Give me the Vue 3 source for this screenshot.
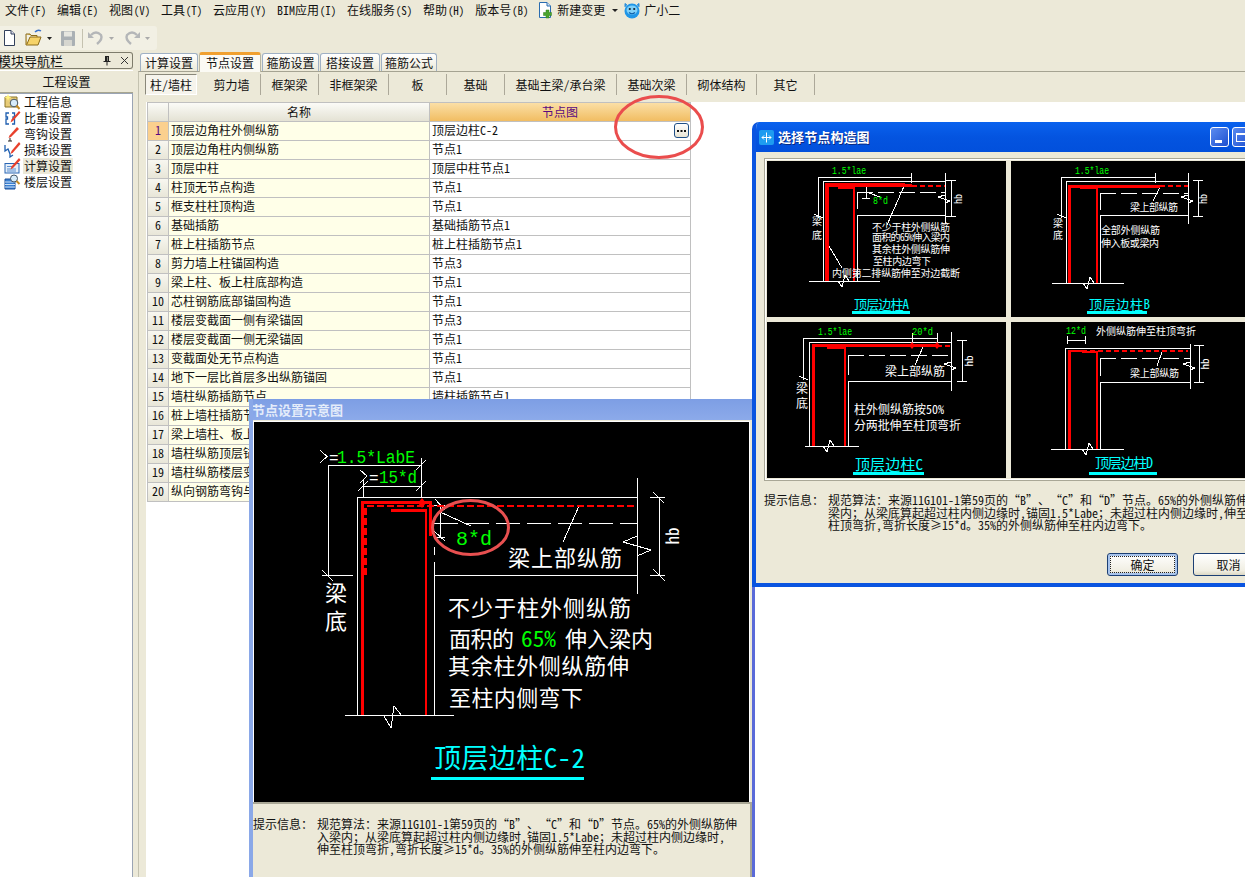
<template>
  <div class="app">
    <div class="menubar">
      <span v-for="m in menus" :key="m.label" class="menu-item">{{ m.label }}<span class="mn">({{ m.key }})</span></span>
      <span class="menu-extra">
        <svg class="ico" width="16" height="18" viewBox="0 0 16 18">
          <path d="M2.5 1.5H10L13.5 5V16.5H2.5Z" fill="#fff" stroke="#2a6cb0" />
          <path d="M10 1.5V5H13.5" fill="#cfe2f5" stroke="#2a6cb0" />
          <path d="M9 9H12V11.5H14.5V14.5H12V17H9V14.5H6.5V11.5H9Z" fill="#4aa32e" stroke="#2f7d1c" stroke-width=".5" />
        </svg>
        <span class="extra-text">新建变更</span>
        <svg class="caret" width="6" height="3" viewBox="0 0 6 3"><path d="M0 0H6L3 3Z" fill="#222" /></svg>
        <svg class="mascot" width="16" height="17" viewBox="0 0 16 17">
          <path d="M3 3L1 1.5 1 5M13 3L15 1.5 15 5" fill="#2a8fdc" stroke="#2a8fdc" />
          <ellipse cx="8" cy="9" rx="7.5" ry="7.5" fill="#1f96e8" />
          <ellipse cx="8" cy="8" rx="5.5" ry="4.5" fill="#7fd0f8" />
          <circle cx="5.8" cy="7" r="1.1" fill="#123" />
          <circle cx="10.2" cy="7" r="1.1" fill="#123" />
          <path d="M5 10.5Q8 13 11 10.5" fill="none" stroke="#0d5ea8" stroke-width="1.2" />
        </svg>
        <span class="extra-text">广小二</span>
      </span>
    </div>

    <div class="toolrow">
      <div class="toolbar">
        <svg width="82" height="24" viewBox="0 0 82 24">
          <path d="M4.5 4.500H11L14.500 8V19.500H4.500Z" fill="#fff" stroke="#33415c" />
          <path d="M11 4.500V8H14.500" fill="#dde" stroke="#33415c" />
          <path d="M26 8V19H38L41 11H30L27 18" fill="#f6d36a" stroke="#8a6a1a" />
          <path d="M26 8H30L31 9.500H37V11" fill="#e8b93e" stroke="#8a6a1a" />
          <path d="M35 6Q38 3 41 5" fill="none" stroke="#3a70c8" stroke-width="1.500" />
          <path d="M47 11H52L49.500 14Z" fill="#222" />
          <rect x="61" y="5" width="14" height="15" rx="1" fill="#aab0b4" />
          <rect x="64" y="5.500" width="8" height="5" fill="#e6e6e0" />
          <rect x="64" y="14" width="8" height="6" fill="#d6d6d0" />
        </svg>
        <i class="tool-sep"></i>
        <svg width="72" height="24" viewBox="0 0 72 24">
          <path d="M8 9Q13 4 18 9Q20 13 14 18" fill="none" stroke="#b4b6b8" stroke-width="2.400" />
          <path d="M5 6V12H11Z" fill="#b4b6b8" />
          <path d="M26 11H31L28.500 14Z" fill="#aaa" />
          <path d="M54 9Q49 4 44 9Q42 13 48 18" fill="none" stroke="#b4b6b8" stroke-width="2.400" />
          <path d="M57 6V12H51Z" fill="#b4b6b8" />
          <path d="M62 11H67L64.500 14Z" fill="#aaa" />
        </svg>
      </div>
    </div>

    <div class="workspace">
      <aside class="nav">
        <div class="nav-head">
          <span class="nav-title">模块导航栏</span>
          <svg width="10" height="11" viewBox="0 0 10 11"><path d="M3 1H7V6H8.500V7H5.500V10.500H4.500V7H1.500V6H3ZM5.500 2V6H6V2Z" fill="#222" /></svg>
          <svg width="9" height="9" viewBox="0 0 9 9"><path d="M1 1L8 8M8 1L1 8" stroke="#333" fill="none" /></svg>
        </div>
        <div class="nav-btn">工程设置</div>
        <ul class="nav-list">
          <li v-for="(n, i) in navItems" :key="n" class="nav-row">
            <svg width="17" height="16" viewBox="0 0 17 16" class="nav-ico">
              <template v-if="i === 0">
                <path d="M1 3H13V13H1Z" fill="#e8cc78" stroke="#8a7428" />
                <path d="M4 0L5 2.500L7.500 3.500L5 4.500L4 7L3 4.500L.5 3.500L3 2.500Z" fill="#fff27a" />
                <circle cx="10" cy="9" r="3.800" fill="#d7ecfb" stroke="#456" />
                <path d="M12.500 11.500L15.500 15" stroke="#c58a22" stroke-width="2" />
              </template>
              <template v-else-if="i === 1">
                <path d="M5 3H2V7H3.500V9H2V14H5M8 3H10.500V7H9V9H10.500V14H8" fill="none" stroke="#1f5fb0" stroke-width="1.300" />
                <path d="M15 1L16.500 2.500L9 11L6.500 12.500L7.500 9.500Z" fill="#e8402c" />
              </template>
              <template v-else-if="i === 2">
                <path d="M13 1L15 3L7 11L4.500 12L5.500 9.500Z" fill="#e8402c" />
                <path d="M6 12V15M4 15H8" stroke="#222" fill="none" />
              </template>
              <template v-else-if="i === 3">
                <path d="M1 3V9L4 7L6 12V15L9 13" fill="none" stroke="#1f5fb0" stroke-width="1.300" />
                <path d="M15 0L16.500 2L9 10.500L6.500 12L7.500 9Z" fill="#e8402c" />
              </template>
              <template v-else-if="i === 4">
                <rect x="1" y="5.500" width="14" height="9.500" fill="#e4eef9" stroke="#2a66b4" />
                <path d="M3 8.500H9M3 11H12M3 13H12" stroke="#5b8fd0" />
                <path d="M15 0L16.500 2L9 10L6.500 11.500L7.500 8.500Z" fill="#e8402c" />
              </template>
              <template v-else>
                <path d="M1 5H11V15H1Z" fill="#3a7fd0" stroke="#1a4f98" />
                <path d="M1 8H11M1 10.500H11M1 13H11" stroke="#cfe3f8" />
                <circle cx="10" cy="4.500" r="3.500" fill="#d7ecfb" stroke="#456" />
                <path d="M12.500 7L15.500 10" stroke="#c58a22" stroke-width="2" />
              </template>
            </svg>
            <span class="nav-text" :class="{ sel: i === 4 }">{{ n }}</span>
          </li>
        </ul>
      </aside>

      <main class="main">
        <div class="tabs">
          <div v-for="t in tabs" :key="t.label" class="tab" :class="{ active: t.active }" :style="{ width: t.w + 'px' }">{{ t.label }}</div>
        </div>
        <div class="panel">
          <div class="subtabs">
            <div v-for="(s, i) in subTabs" :key="s.label" class="subtab" :class="{ pressed: i === 0 }" :style="{ width: s.w + 'px' }">{{ s.label }}</div>
          </div>
          <div class="sheet">
            <div class="grid">
              <div class="hd corner"></div>
              <div class="hd">名称</div>
              <div class="hd hd-on">节点图</div>
              <template v-for="(r, i) in rows" :key="i">
                <div class="num" :class="{ on: i === 0 }">{{ i + 1 }}</div>
                <div class="name">{{ r[0] }}</div>
                <div class="val">
                  {{ r[1] }}
                  <span v-if="i === 0" class="dots">
                    <svg width="13" height="13" viewBox="0 0 13 13"><path d="M2 6H4V8H2ZM5.500 6H7.500V8H5.500ZM9 6H11V8H9Z" fill="#111" /></svg>
                  </span>
                </div>
              </template>
            </div>
          </div>
        </div>
      </main>
    </div>

    <svg class="mark" width="96" height="70" viewBox="0 0 96 70">
      <ellipse cx="48" cy="35" rx="43.500" ry="30.500" fill="none" stroke="#ea4d4d" stroke-width="3" />
    </svg>

    <!-- 节点设置示意图 -->
    <section class="dlg dlg-view">
      <header class="view-title">节点设置示意图</header>
      <svg class="canvas" width="495" height="380" viewBox="254 422 495 380">
        <path class="ln" d="M328 465H421M328 465V575M322 575H353M322 570L333 581M421 458V497M416 470L426 460M416 491L426 481M363 486H421M363 480V497M358 491L368 481M357 497H637M357 497V715M434 547V555M434 562V715M434 575H637M637 478V594M345 715H454M659 497V575M650 497H665M650 575H665M653 492L664 503M653 569L665 581M440 504V537M434 505H445M434 537H445M435 499L445 510M434 531L445 541M440 512L471 526M579 506L563 542" />
        <path class="ln" stroke-dasharray="24 7" d="M434 523H637" />
        <path class="ln" d="M637 536L623 542L651 550L637 556M384 716L391 728L394 706L402 716" />
        <path class="ln" d="M320 450L327 456.500L320 463" />
        <path class="ln" d="M360 470L367 476L360 483" />
        <path class="red" stroke-width="3" d="M362 715V502.500H430V536" />
        <path class="red" stroke-width="2.500" stroke-dasharray="7 3" d="M365.500 575V506H637" />
        <path class="red" stroke-width="2.500" d="M426 715V510.500H391" />
        <path class="redf" d="M422 498L426 503L422 508L418 503Z" />
        <text class="t w mono" x="329" y="463" font-size="16">=</text>
        <text class="t g mono" x="337" y="463" font-size="19" textLength="78" lengthAdjust="spacingAndGlyphs">1.5*LabE</text>
        <text class="t w mono" x="369" y="483" font-size="16">=</text>
        <text class="t g mono" x="379" y="483" font-size="19" textLength="38" lengthAdjust="spacingAndGlyphs">15*d</text>
        <text class="t g mono" x="456" y="545" font-size="20" textLength="36" lengthAdjust="spacingAndGlyphs">8*d</text>
        <text class="t w" x="508" y="566" font-size="22" textLength="114">梁上部纵筋</text>
        <text class="t w" x="325" y="601" font-size="22">梁</text>
        <text class="t w" x="325" y="629" font-size="22">底</text>
        <text class="t w hb" transform="translate(679 536) rotate(-90)" font-size="17">hb</text>
        <text class="t w" x="448" y="616" font-size="22" textLength="183">不少于柱外侧纵筋</text>
        <text class="t w" x="449" y="647" font-size="22" textLength="65">面积的</text>
        <text class="t g" x="521" y="647" font-size="22" textLength="35" lengthAdjust="spacingAndGlyphs">65%</text>
        <text class="t w" x="565" y="647" font-size="22" textLength="88">伸入梁内</text>
        <text class="t w" x="448" y="674" font-size="22" textLength="181">其余柱外侧纵筋伸</text>
        <text class="t w" x="449" y="706" font-size="22" textLength="134">至柱内侧弯下</text>
        <text class="t c" x="434" y="768" font-size="27" textLength="151">顶层边柱C-2</text>
        <rect class="cy" x="431" y="777" width="153" height="3" />
        <ellipse cx="470.500" cy="527.500" rx="38" ry="27" fill="none" stroke="#e85050" stroke-width="3" />
      </svg>
      <div class="hint view-hint">
        <span class="hint-label">提示信息：</span>
        <div class="hint-lines">
          <div>规范算法：来源11G101-1第59页的<i class="qo">“</i>B<i class="qc">”</i>、<i class="qo">“</i>C<i class="qc">”</i>和<i class="qo">“</i>D<i class="qc">”</i>节点。65%的外侧纵筋伸</div>
          <div>入梁内；从梁底算起超过柱内侧边缘时，锚固1.5*Labe；未超过柱内侧边缘时，</div>
          <div>伸至柱顶弯折，弯折长度≥15*d。35%的外侧纵筋伸至柱内边弯下。</div>
        </div>
      </div>
    </section>

    <!-- 选择节点构造图 -->
    <section class="dlg dlg-pick">
      <header class="pick-title">
        <svg width="15" height="15" viewBox="0 0 15 15">
          <rect width="15" height="15" rx="2" fill="#1e9cf0" />
          <path d="M7.500 2.500V12.500M3 7.500H12M5 5.500L3 7.500L5 9.500M10 5.500L12 7.500L10 9.500" fill="none" stroke="#fff" />
        </svg>
        <span>选择节点构造图</span>
        <i class="win-btn"><b class="min"></b></i>
        <i class="win-btn"><b class="max"></b></i>
      </header>
      <div class="pick-body">
        <div class="thumbs">
          <svg class="thumb" width="239" height="156" viewBox="767 161 239 156">
            <path class="ln" d="M818 177H912M818 177V218M814 214L823 218M911 173V183M823 181H945M823 181V281M945 173V224M857 192V209M857 215V281M857 215H945M951 180V216M946 180H956M946 216H956M809 281H880M866 183V198M862 198H870M829 246L842 268M905 184L887 225M866 192L880 197" />
            <path class="ln" stroke-dasharray="16 5" d="M857 192.500H945" />
            <path class="ln" d="M945 195L938 197L950 201L945 203M838 281L842 287L845 275L849 281" />
            <path class="red" stroke-width="4" d="M827 281V185H905" />
            <path class="red" stroke-width="3" d="M905 185H912" />
            <path class="red" stroke-width="2" stroke-dasharray="5 3" d="M912 185.500H945" />
            <path class="red" stroke-width="2" d="M854 281V187.500H838" />
            <text class="t mono g" x="832" y="174" font-size="10" textLength="34" lengthAdjust="spacingAndGlyphs">1.5*lae</text>
            <text class="t mono g" x="873" y="204" font-size="10" textLength="15" lengthAdjust="spacingAndGlyphs">8*d</text>
            <text class="t w hb" transform="translate(962 199) rotate(-90)" font-size="10">hb</text>
            <text class="t w" x="812" y="225" font-size="10">梁</text>
            <text class="t w" x="812" y="239" font-size="10">底</text>
            <text class="t w" x="872" y="231" font-size="10" textLength="78">不少于柱外侧纵筋</text>
            <text class="t w" x="872" y="241" font-size="10" textLength="78">面积的65%伸入梁内</text>
            <text class="t w" x="872" y="253" font-size="10" textLength="78">其余柱外侧纵筋伸</text>
            <text class="t w" x="873" y="265" font-size="10" textLength="58">至柱内边弯下</text>
            <text class="t w" x="832" y="277" font-size="10" textLength="128">内侧第二排纵筋伸至对边截断</text>
            <text class="t c" x="854" y="309" font-size="13" textLength="55">顶层边柱A</text>
            <rect class="cy" x="852" y="311" width="58" height="3" />
          </svg>
          <svg class="thumb" width="239" height="156" viewBox="1011 161 239 156">
            <path class="ln" d="M1061 177H1156M1061 177V218M1057 214L1066 218M1155 173V183M1066 181H1188M1066 181V283M1188 173V224M1100 194V210M1100 215V283M1100 215H1188M1198 180V216M1193 180H1203M1193 216H1203M1052 283H1124M1160 187L1153 201" />
            <path class="ln" stroke-dasharray="16 5" d="M1100 193.500H1188" />
            <path class="ln" d="M1188 195L1181 197L1193 201L1188 203M1083 283L1087 289L1090 277L1094 283" />
            <path class="red" stroke-width="3" d="M1069.500 283V186H1160" />
            <path class="red" stroke-width="2" stroke-dasharray="5 3" d="M1160 186H1188" />
            <path class="red" stroke-width="2" d="M1097 283V187.500H1080" />
            <text class="t mono g" x="1075" y="174" font-size="10" textLength="34" lengthAdjust="spacingAndGlyphs">1.5*lae</text>
            <text class="t w hb" transform="translate(1207 199) rotate(-90)" font-size="10">hb</text>
            <text class="t w" x="1053" y="227" font-size="10">梁</text>
            <text class="t w" x="1053" y="239" font-size="10">底</text>
            <text class="t w" x="1130" y="211" font-size="10" textLength="48">梁上部纵筋</text>
            <text class="t w" x="1101" y="234" font-size="10" textLength="59">全部外侧纵筋</text>
            <text class="t w" x="1101" y="247" font-size="10" textLength="58">伸入板或梁内</text>
            <text class="t c" x="1089" y="309" font-size="13" textLength="61">顶层边柱B</text>
            <rect class="cy" x="1087" y="311" width="60" height="3" />
          </svg>
          <svg class="thumb" width="239" height="156" viewBox="767 322 239 156">
            <path class="ln" d="M803 338H937M803 338V380M799 376L808 380M809 342H951M809 342V446M951 332V391M848 355V375M848 381V446M848 381H951M962 340V381M957 340H967M957 381H967M805 446H859M912 333V345M937 333V345M923 347L915 365" />
            <path class="ln" stroke-dasharray="16 5" d="M848 355.500H951" />
            <path class="ln" d="M951 362L944 364L956 368L951 370M823 446L827 452L830 440L834 446" />
            <path class="red" stroke-width="2.500" d="M813.500 446V345.500H937" />
            <path class="red" stroke-width="2" stroke-dasharray="5 3" d="M937 345.500H951" />
            <path class="red" stroke-width="2" d="M845 446V348H827" />
            <path class="redf" d="M912 342L915 345.500L912 349L909 345.500ZM937 342L940 345.500L937 349L934 345.500Z" />
            <text class="t mono g" x="818" y="335" font-size="10" textLength="34" lengthAdjust="spacingAndGlyphs">1.5*lae</text>
            <text class="t mono g" x="912" y="335" font-size="10" textLength="21" lengthAdjust="spacingAndGlyphs">20*d</text>
            <text class="t w hb" transform="translate(973 361) rotate(-90)" font-size="11">hb</text>
            <text class="t w" x="796" y="393" font-size="12">梁</text>
            <text class="t w" x="796" y="408" font-size="12">底</text>
            <text class="t w" x="885" y="376" font-size="12" textLength="60">梁上部纵筋</text>
            <text class="t w" x="854" y="414" font-size="12" textLength="90">柱外侧纵筋按50%</text>
            <text class="t w" x="854" y="430" font-size="12" textLength="107">分两批伸至柱顶弯折</text>
            <text class="t c" x="855" y="470" font-size="15" textLength="68">顶层边柱C</text>
            <rect class="cy" x="853" y="472" width="71" height="3" />
          </svg>
          <svg class="thumb" width="239" height="156" viewBox="1011 322 239 156">
            <path class="ln" d="M1067 340H1085M1067 336V344M1085 336V344M1065 348H1190M1065 348V449M1190 344V389M1100 358V376M1100 382V449M1100 382H1190M1199 345V382M1194 345H1204M1194 382H1204M1051 449H1124M1162 352L1157 366" />
            <path class="ln" stroke-dasharray="16 5" d="M1100 358.500H1190" />
            <path class="ln" d="M1190 362L1183 364L1195 368L1190 370M1082 449L1086 455L1089 443L1093 449" />
            <path class="red" stroke-width="2.500" d="M1069.500 449V351H1082" />
            <path class="red" stroke-width="2" stroke-dasharray="5 3" d="M1082 351H1188" />
            <path class="red" stroke-width="2" d="M1096.500 449V352H1082" />
            <text class="t mono g" x="1066" y="334" font-size="10" textLength="20" lengthAdjust="spacingAndGlyphs">12*d</text>
            <text class="t w" x="1096" y="335" font-size="10" textLength="100">外侧纵筋伸至柱顶弯折</text>
            <text class="t w hb" transform="translate(1209 364) rotate(-90)" font-size="11">hb</text>
            <text class="t w" x="1130" y="377" font-size="10" textLength="49">梁上部纵筋</text>
            <text class="t c" x="1095" y="468" font-size="14" textLength="58">顶层边柱D</text>
            <rect class="cy" x="1089" y="472" width="68" height="3" />
          </svg>
        </div>
        <div class="hint pick-hint">
          <span class="hint-label">提示信息：</span>
          <div class="hint-lines">
            <div>规范算法：来源11G101-1第59页的<i class="qo">“</i>B<i class="qc">”</i>、<i class="qo">“</i>C<i class="qc">”</i>和<i class="qo">“</i>D<i class="qc">”</i>节点。65%的外侧纵筋伸入</div>
            <div>梁内；从梁底算起超过柱内侧边缘时，锚固1.5*Labe；未超过柱内侧边缘时，伸至</div>
            <div>柱顶弯折，弯折长度≥15*d。35%的外侧纵筋伸至柱内边弯下。</div>
          </div>
        </div>
        <div class="pick-actions">
          <button class="xp-btn default">确定</button>
          <button class="xp-btn">取消</button>
        </div>
      </div>
    </section>
  </div>
</template>

<script setup>
const menus = [
  { label: '文件', key: 'F' },
  { label: '编辑', key: 'E' },
  { label: '视图', key: 'V' },
  { label: '工具', key: 'T' },
  { label: '云应用', key: 'Y' },
  { label: 'BIM应用', key: 'I' },
  { label: '在线服务', key: 'S' },
  { label: '帮助', key: 'H' },
  { label: '版本号', key: 'B' }
]

const navItems = ['工程信息', '比重设置', '弯钩设置', '损耗设置', '计算设置', '楼层设置']

const tabs = [
  { label: '计算设置', w: 58 },
  { label: '节点设置', w: 62, active: true },
  { label: '箍筋设置', w: 57 },
  { label: '搭接设置', w: 60 },
  { label: '箍筋公式', w: 56 }
]

const subTabs = [
  { label: '柱/墙柱', w: 58 },
  { label: '剪力墙', w: 58 },
  { label: '框架梁', w: 58 },
  { label: '非框架梁', w: 70 },
  { label: '板', w: 58 },
  { label: '基础', w: 58 },
  { label: '基础主梁/承台梁', w: 112 },
  { label: '基础次梁', w: 70 },
  { label: '砌体结构', w: 70 },
  { label: '其它', w: 58 }
]

const rows = [
  ['顶层边角柱外侧纵筋', '顶层边柱C-2'],
  ['顶层边角柱内侧纵筋', '节点1'],
  ['顶层中柱', '顶层中柱节点1'],
  ['柱顶无节点构造', '节点1'],
  ['框支柱柱顶构造', '节点1'],
  ['基础插筋', '基础插筋节点1'],
  ['桩上柱插筋节点', '桩上柱插筋节点1'],
  ['剪力墙上柱锚固构造', '节点3'],
  ['梁上柱、板上柱底部构造', '节点1'],
  ['芯柱钢筋底部锚固构造', '节点1'],
  ['楼层变截面一侧有梁锚固', '节点3'],
  ['楼层变截面一侧无梁锚固', '节点1'],
  ['变截面处无节点构造', '节点1'],
  ['地下一层比首层多出纵筋锚固', '节点1'],
  ['墙柱纵筋插筋节点', '墙柱插筋节点1'],
  ['桩上墙柱插筋节点', '节点1'],
  ['梁上墙柱、板上墙柱底部构造', '节点1'],
  ['墙柱纵筋顶层锚固', '节点1'],
  ['墙柱纵筋楼层变截面', '节点1'],
  ['纵向钢筋弯钩与机械锚固', '节点1']
]
</script>

<style>
html,
body {
  overflow: hidden;
}
</style>

<style scoped>
.app {
  position: relative;
  display: flex;
  flex-direction: column;
  width: 1245px;
  height: 877px;
  overflow: hidden;
  background: #ece9d8;
  color: #111;
  font-family: "Noto Sans CJK SC", "Liberation Sans", sans-serif;
  font-size: 12px;
  font-feature-settings: "hwid";
  line-height: 16px;
}

.menubar {
  display: flex;
  align-items: center;
  flex: none;
  height: 20px;
  padding-left: 5px;
}

.menu-item {
  flex: none;
  margin-right: 10px;
  white-space: nowrap;
}

.mn {
  display: inline-block;
  width: 18px;
  font-size: 11px;
  text-align: center;
}

.menu-extra {
  display: flex;
  align-items: center;
  margin-left: -2px;
}

.extra-text {
  white-space: nowrap;
}

.ico {
  margin-right: 4px;
}

.caret {
  margin: 0 6px 0 7px;
}

.mascot {
  margin-right: 4px;
}

.toolrow {
  flex: none;
  height: 32px;
  padding-top: 6px;
  box-sizing: border-box;
}

.toolbar {
  display: flex;
  align-items: center;
  width: 157px;
  height: 24px;
  background: #f2f0e4;
  border-radius: 0 3px 3px 0;
}

.tool-sep {
  width: 1px;
  height: 19px;
  background: #c5c2b0;
}

.workspace {
  display: flex;
  flex: 1;
  min-height: 0;
}

.nav {
  display: flex;
  flex-direction: column;
  flex: none;
  width: 133px;
  box-sizing: border-box;
  overflow: hidden;
}

.nav-head {
  display: flex;
  align-items: center;
  flex: none;
  height: 15px;
  border: 1px solid #7e7c6c;
  border-left: 0;
  border-radius: 0 3px 3px 0;
  background: #ece9d8;
  font-size: 13px;
}

.nav-title {
  flex: 1;
  margin-left: -2px;
  white-space: nowrap;
}

.nav-head svg {
  margin-right: 8px;
}

.nav-head svg:last-child {
  margin-right: 3px;
}

.nav-btn {
  flex: none;
  height: 21px;
  margin-top: 1px;
  border-top: 1px solid #fff;
  border-bottom: 1px solid #a8a690;
  line-height: 21px;
  text-align: center;
}

.nav-list {
  flex: 1;
  margin: 0;
  padding: 0;
  list-style: none;
  background: #fff;
  border-top: 1px solid #9aa4b4;
  border-right: 1px solid #9aa4b4;
}

.nav-row {
  display: flex;
  align-items: center;
  height: 16px;
  padding-left: 4px;
}

.nav-ico {
  flex: none;
  margin-right: 2px;
}

.nav-text {
  padding: 0 1px;
  white-space: nowrap;
}

.nav-text.sel {
  background: #ece9d8;
}

.main {
  display: flex;
  flex-direction: column;
  flex: 1;
  min-width: 0;
  margin-left: 5px;
}

.tabs {
  display: flex;
  align-items: flex-end;
  flex: none;
  height: 19px;
  padding-left: 2px;
}

.tab {
  flex: none;
  height: 18px;
  margin-right: 1px;
  box-sizing: border-box;
  border: 1px solid #9fb0c4;
  border-bottom: 0;
  border-radius: 3px 3px 0 0;
  background: linear-gradient(#fff, #ece9d8);
  line-height: 18px;
  text-align: center;
  white-space: nowrap;
}

.tab.active {
  height: 20px;
  position: relative;
  z-index: 1;
  margin-bottom: -1px;
  border-color: #b8b6a4;
  border-top: 3px solid #f0a030;
  background: #fbfaf4;
  line-height: 16px;
}

.panel {
  display: flex;
  flex-direction: column;
  flex: 1;
  min-height: 0;
  border-top: 1px solid #a5a392;
  border-left: 1px solid #c4c2b0;
}

.subtabs {
  display: flex;
  flex: none;
  height: 30px;
  padding: 2px 0 0 6px;
  box-sizing: border-box;
}

.subtab {
  flex: none;
  height: 21px;
  box-sizing: border-box;
  border-right: 1px solid #aca899;
  line-height: 21px;
  text-align: center;
  white-space: nowrap;
}

.subtab.pressed {
  width: 52px !important;
  margin-right: 6px;
  border: 1px solid;
  border-color: #8a887a #fff #fff #8a887a;
  background: #f6f4ec;
  line-height: 19px;
}

.sheet {
  flex: 1;
  margin-left: 7px;
  padding-left: 1px;
  background: #fff;
}

.grid {
  display: grid;
  grid-template-columns: 21px 261px 261px;
  grid-auto-rows: 19px;
  width: 543px;
  border-left: 1px solid #c0c0c0;
  border-top: 1px solid #c0c0c0;
}

.grid > div {
  box-sizing: border-box;
  overflow: hidden;
  border-right: 1px solid #c0c0c0;
  border-bottom: 1px solid #c0c0c0;
  line-height: 16px;
  white-space: nowrap;
}

.grid > .hd {
  line-height: 17px;
}

.hd {
  background: linear-gradient(#fbfbf7, #e4e2d4);
  text-align: center;
}

.hd-on {
  background: linear-gradient(#fbdfa6, #f1bd62);
  color: #5a0a80;
}

.num {
  background: linear-gradient(#f8f7f0, #e8e6d8);
  text-align: center;
}

.num.on {
  background: #fbd08e;
  color: #5a0a80;
}

.name {
  padding-left: 2px;
  background: #ffffe8;
}

.val {
  position: relative;
  padding-left: 2px;
  background: #fff;
}

.dots {
  position: absolute;
  top: 1px;
  right: 1px;
  display: block;
  width: 15px;
  height: 15px;
  box-sizing: border-box;
  border: 1px solid #1f4f86;
  border-radius: 3px;
  background: linear-gradient(#fff, #e8e4d4);
}

.dots svg {
  display: block;
}

.mark {
  position: absolute;
  left: 611px;
  top: 92px;
  pointer-events: none;
}

.dlg {
  position: absolute;
  display: flex;
  flex-direction: column;
  box-sizing: border-box;
  overflow: hidden;
  background: #ece9d8;
}

.dlg-pick {
  left: 752px;
  top: 122px;
  width: 510px;
  height: 465px;
  border: 4px solid #0a54e0;
  border-top: 0;
  border-radius: 7px 7px 0 0;
}

.pick-title {
  display: flex;
  align-items: center;
  flex: none;
  height: 30px;
  margin: 0 -4px;
  padding: 0 4px 0 7px;
  background: linear-gradient(#0a62ee, #0454e0 50%, #0250dc);
  color: #fff;
  font-size: 13px;
  font-weight: 700;
  text-shadow: 1px 1px 0 #0a2a80;
}

.pick-title span {
  flex: none;
  width: 432px;
  margin-left: 4px;
  letter-spacing: 0.1px;
}

.win-btn {
  display: flex;
  align-items: center;
  justify-content: center;
  flex: none;
  width: 19px;
  height: 20px;
  margin-right: 3px;
  box-sizing: border-box;
  border: 1px solid #fff;
  border-radius: 3px;
  background: linear-gradient(135deg, #5c8cf0, #1d4fd0);
}

.win-btn .min {
  width: 7px;
  height: 3px;
  margin-top: 9px;
  margin-right: 2px;
  background: #fff;
}

.win-btn .max {
  width: 11px;
  height: 9px;
  box-sizing: border-box;
  border: 1px solid #fff;
  border-top-width: 2px;
}

.pick-body {
  display: flex;
  flex-direction: column;
  flex: 1;
  min-height: 0;
  padding: 6px 0 0 8px;
}

.thumbs {
  display: grid;
  grid-template-columns: 239px 239px;
  grid-auto-rows: 156px;
  gap: 5px;
  flex: none;
  width: 486px;
  padding: 2px;
  border: 1px solid #a9a796;
  box-shadow: inset 0 0 0 1px #fff;
}

.thumb {
  display: block;
  background: #000;
}

.ln {
  fill: none;
  stroke: #fff;
  stroke-width: 1;
  shape-rendering: crispEdges;
}

.red {
  fill: none;
  stroke: #ff0000;
  shape-rendering: crispEdges;
}

.redf {
  fill: #ff0000;
}

.cy {
  fill: #00ffff;
}

.t {
  font-family: "Noto Sans CJK SC", sans-serif;
}

.mono {
  font-family: "Liberation Mono", "Noto Sans CJK SC", monospace;
}

.w {
  fill: #fff;
}

.g {
  fill: #00ff00;
}

.c {
  fill: #00ffff;
}

.hb {
  text-anchor: middle;
}

.hint {
  display: flex;
  font-size: 12px;
  line-height: 12.500px;
  white-space: nowrap;
}

.hint-label {
  flex: none;
  width: 64px;
}

.qo,
.qc {
  display: inline-block;
  width: 12px;
  font-style: normal;
}

.qo {
  text-align: right;
}

.qc {
  text-align: left;
}

.pick-hint {
  flex: none;
  margin-top: 13px;
}

.pick-actions {
  display: flex;
  gap: 15px;
  margin-top: 21px;
  padding-left: 343px;
}

.xp-btn {
  flex: none;
  width: 71px;
  height: 23px;
  padding: 0;
  border: 1px solid #1c3f74;
  border-radius: 3px;
  background: linear-gradient(#fff, #f0eee2 80%, #dcd8c4);
  color: #111;
  font-family: inherit;
  font-size: 12px;
}

.xp-btn.default {
  box-shadow: inset 0 0 0 2px #a8c4ec;
  outline: 1px dotted #222;
  outline-offset: -4px;
}

.dlg-view {
  left: 249px;
  top: 399px;
  width: 506px;
  height: 478px;
  border-left: 4px solid #8aa8e8;
  border-right: 3px solid #5a6ad8;
}

.view-title {
  flex: none;
  height: 21px;
  margin: 0 -3px 0 -4px;
  padding-left: 3px;
  background: linear-gradient(#7d9ee4, #8caaea);
  color: #e4ecfa;
  font-size: 13px;
  font-weight: 700;
  line-height: 22px;
}

.canvas {
  display: block;
  flex: none;
  margin: 2px 0 0 1px;
  background: #000;
  outline: 1px solid #fff;
}

.view-hint {
  flex: 1;
  margin-top: 0;
  padding: 14px 0 0;
  border-top: 2px solid #a9a796;
  border-right: 2px solid #a9a796;
}
</style>
